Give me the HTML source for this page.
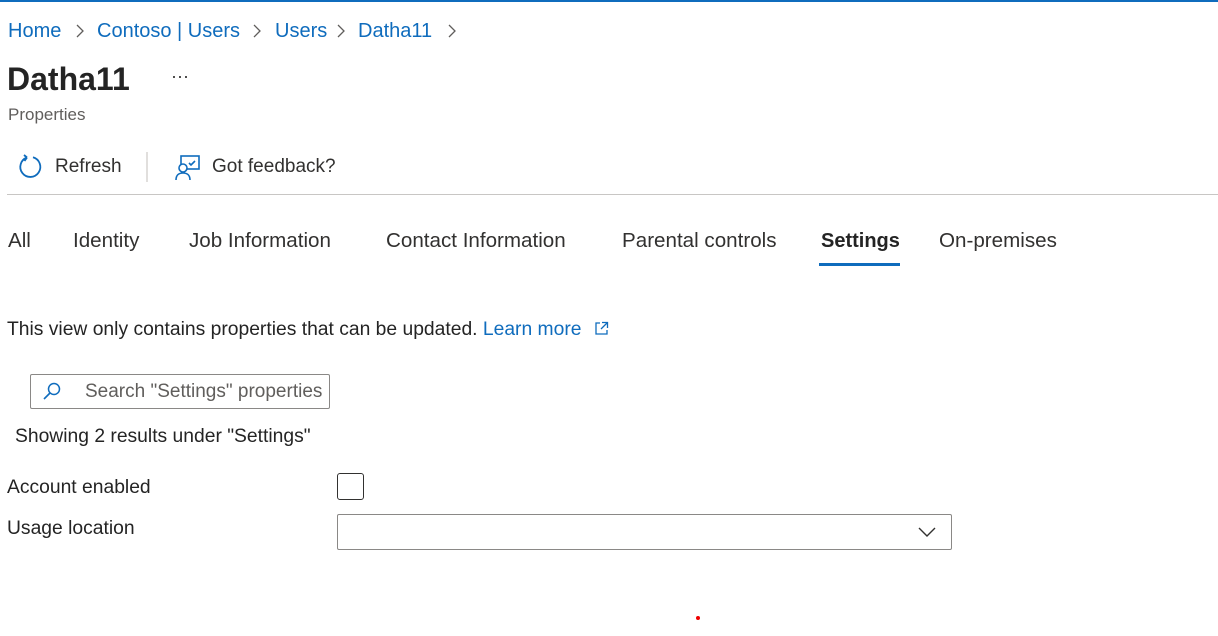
<!DOCTYPE html>
<html><head><style>
body{margin:0;width:1218px;height:636px;background:#fff;font-family:"Liberation Sans",sans-serif;color:#323130;position:relative;overflow:hidden}
.a{position:absolute;white-space:nowrap}
.b{color:#0f6cbd}
.t{font-size:20.6px;line-height:24px;top:229px}
.f{font-size:19.3px;color:#242424}
</style></head><body>
<div class="a" style="left:0;top:0;width:1218px;height:2px;background:#0f6cbd"></div>
<div class="a b" style="left:8px;top:19px;font-size:20px;line-height:24px">Home</div>
<div class="a b" style="left:97px;top:19px;font-size:20px;line-height:24px">Contoso | Users</div>
<div class="a b" style="left:275px;top:19px;font-size:20px;line-height:24px">Users</div>
<div class="a b" style="left:358px;top:19px;font-size:20px;line-height:24px">Datha11</div>
<svg class="a" style="left:0;top:21px" width="470" height="20"><g fill="none" stroke="#605e5c" stroke-width="1.3"><path d="M77 4l6 6-6 6"/><path d="M254 4l6 6-6 6"/><path d="M338 4l6 6-6 6"/><path d="M449 4l6 6-6 6"/></g></svg>
<div class="a" style="left:7px;top:59px;font-size:32px;font-weight:bold;line-height:40px;color:#242424">Datha11</div>
<div class="a" style="left:171px;top:66px;font-size:18px">···</div>
<div class="a" style="left:8px;top:105px;font-size:17px;color:#605e5c">Properties</div>
<svg class="a" style="left:18px;top:154px" width="26" height="26" viewBox="0 0 26 26"><path d="M9 3.5A10 10 0 1 0 15 3.3M9 3.5L6 1M9 3.5L6.5 7" fill="none" stroke="#0f6cbd" stroke-width="1.8"/></svg>
<div class="a" style="left:55px;top:156px;font-size:19px">Refresh</div>
<div class="a" style="left:146px;top:152px;width:2px;height:30px;background:#e1dfdd"></div>
<svg class="a" style="left:174px;top:154px" width="28" height="28" viewBox="0 0 28 28"><rect x="7" y="2" width="18" height="13" fill="none" stroke="#0f6cbd" stroke-width="1.6"/><circle cx="9" cy="14" r="4" fill="#fff" stroke="#0f6cbd" stroke-width="1.6"/><path d="M2 26c0-5 3-7 7-7s7 2 7 7" fill="none" stroke="#0f6cbd" stroke-width="1.6"/><path d="M15 9l2 2 4-4" fill="none" stroke="#0f6cbd" stroke-width="1.6"/></svg>
<div class="a" style="left:212px;top:156px;font-size:19px">Got feedback?</div>
<div class="a" style="left:7px;top:194px;width:1211px;height:1px;background:#c8c6c4"></div>
<div class="a t" style="left:8px">All</div>
<div class="a t" style="left:73px">Identity</div>
<div class="a t" style="left:189px">Job Information</div>
<div class="a t" style="left:386px">Contact Information</div>
<div class="a t" style="left:622px">Parental controls</div>
<div class="a t" style="left:821px;font-weight:bold;color:#242424;font-size:20px">Settings</div>
<div class="a" style="left:819px;top:263px;width:81px;height:3px;background:#0f6cbd"></div>
<div class="a t" style="left:939px">On-premises</div>
<div class="a f" style="left:7px;top:319px;line-height:22px">This view only contains properties that can be updated. <span class="b">Learn more</span></div>
<svg class="a" style="left:594px;top:321px" width="15" height="15" viewBox="0 0 15 15"><path d="M6 2H2v11h11V9M8 1.5h5.5V7M13.5 1.5L7 8" fill="none" stroke="#0f6cbd" stroke-width="1.3"/></svg>
<div class="a" style="left:30px;top:374px;width:298px;height:33px;border:1px solid #8a8886;border-radius:2px"></div>
<svg class="a" style="left:42px;top:381px" width="20" height="20" viewBox="0 0 20 20"><circle cx="12" cy="8" r="5.5" fill="none" stroke="#0f6cbd" stroke-width="1.5"/><path d="M8 12L2 18" stroke="#0f6cbd" stroke-width="1.6"/></svg>
<div class="a" style="left:85px;top:381px;font-size:19px;color:#605e5c">Search "Settings" properties</div>
<div class="a f" style="left:15px;top:426px">Showing 2 results under "Settings"</div>
<div class="a f" style="left:7px;top:477px">Account enabled</div>
<div class="a" style="left:337px;top:473px;width:25px;height:25px;border:1px solid #323130;border-radius:3px"></div>
<div class="a f" style="left:7px;top:518px">Usage location</div>
<div class="a" style="left:337px;top:514px;width:613px;height:34px;border:1px solid #8a8886;border-radius:2px"></div>
<svg class="a" style="left:917px;top:524px" width="20" height="14" viewBox="0 0 20 14"><path d="M2 4l8 8 8-8" fill="none" stroke="#323130" stroke-width="1.4"/></svg>
<div class="a" style="left:696px;top:616px;width:4px;height:4px;border-radius:2px;background:#e00"></div>
</body></html>
